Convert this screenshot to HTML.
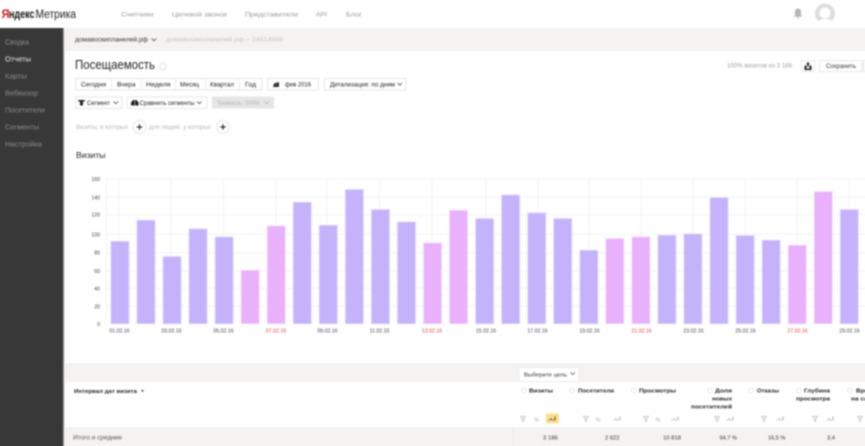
<!DOCTYPE html>
<html lang="ru">
<head>
<meta charset="utf-8">
<title>Яндекс Метрика</title>
<style>
html,body{margin:0;padding:0;background:#fff;width:865px;height:446px;overflow:hidden;position:relative}
svg{display:block;position:absolute;left:-10px;top:-10px;filter:blur(.75px)}
text{font-family:"Liberation Sans",sans-serif;font-size:6.5px;fill:#444}
.s{fill:#8a8a8a;font-size:7px}
.n{fill:#999;font-size:6.5px}
.b{fill:#222;font-size:6.2px}
.y{fill:#444;font-size:5.2px;text-anchor:end}
.x{fill:#444;font-size:5.2px;text-anchor:middle}
.r{fill:#dc3f4a;font-size:5.2px;text-anchor:middle}
.h{fill:#222;font-size:5.8px;font-weight:bold}
.v{fill:#333;font-size:5.8px}
.g{stroke:#f2f2f2;stroke-width:1;fill:none}
.btn{fill:#fff;stroke:#e6e6e6;stroke-width:1}
.chev{fill:none;stroke:#444;stroke-width:.8}
.f{fill:none;stroke:#bbb;stroke-width:.7}
.c{fill:#fff;stroke:#dcdcdc;stroke-width:.7}
</style>
</head>
<body>
<svg width="885" height="466" viewBox="-10 -10 885 466" xmlns="http://www.w3.org/2000/svg">
<rect x="-10" y="-10" width="885" height="466" fill="#fff"/>

<!-- header -->
<text x="1.5" y="18" style="font-size:12px;font-weight:bold;fill:#e01818" textLength="8" lengthAdjust="spacingAndGlyphs">Я</text>
<text x="9" y="18" style="font-size:11.5px;font-weight:bold;fill:#111" textLength="25.5" lengthAdjust="spacingAndGlyphs">ндекс</text>
<text x="35.5" y="18" style="font-size:11.5px;fill:#222" textLength="40.5" lengthAdjust="spacingAndGlyphs">Метрика</text>
<text class="n" x="121" y="16.5" textLength="32.5" lengthAdjust="spacingAndGlyphs">Счетчики</text>
<text class="n" x="172" y="16.5" textLength="55" lengthAdjust="spacingAndGlyphs">Целевой звонок</text>
<text class="n" x="245" y="16.5" textLength="53" lengthAdjust="spacingAndGlyphs">Представители</text>
<text class="n" x="316" y="16.5" textLength="11" lengthAdjust="spacingAndGlyphs">API</text>
<text class="n" x="346" y="16.5" textLength="16" lengthAdjust="spacingAndGlyphs">Блог</text>
<path d="M798 8.5c-2.2 0-3 1.800-3 3.700v3l-1 1.500h8l-1-1.500v-3c0-1.900-.8-3.700-3-3.700z M797 17.500h2v1h-2z" fill="#b5b5b5"/>
<circle cx="825" cy="13.500" r="10" fill="#dedede"/>
<circle cx="825" cy="13" r="5.500" fill="#fff"/>
<path d="M818 22c2-4 12-4 14 0l-3 2h-8z" fill="#fff"/>

<!-- sidebar -->
<rect x="-10" y="28" width="73" height="428" fill="#383838"/>
<rect x="63" y="28" width="1.200" height="428" fill="#9a9a9a"/>
<text class="s" x="5" y="44.500" textLength="24" lengthAdjust="spacingAndGlyphs">Сводка</text>
<text class="s" x="5" y="61.500" style="fill:#f0f0f0" textLength="26" lengthAdjust="spacingAndGlyphs">Отчеты</text>
<text class="s" x="5" y="78.500" textLength="22" lengthAdjust="spacingAndGlyphs">Карты</text>
<text class="s" x="5" y="95.500" textLength="33" lengthAdjust="spacingAndGlyphs">Вебвизор</text>
<text class="s" x="5" y="112.500" textLength="40" lengthAdjust="spacingAndGlyphs">Посетители</text>
<text class="s" x="5" y="129.500" textLength="34" lengthAdjust="spacingAndGlyphs">Сегменты</text>
<text class="s" x="5" y="146.500" textLength="37" lengthAdjust="spacingAndGlyphs">Настройка</text>

<!-- breadcrumb -->
<rect x="64" y="28" width="811" height="23" fill="#f4f3f1"/>
<text x="75" y="41.500" style="font-size:6.8px;fill:#333" textLength="73" lengthAdjust="spacingAndGlyphs">домавоскипланелей.рф</text>
<path class="chev" d="M151.500 38.500l2.500 2.200 2.500-2.200"/>
<text x="166" y="41.500" style="font-size:6.8px;fill:#c4c4c4" textLength="117" lengthAdjust="spacingAndGlyphs">домавоскипланелей.рф – 24414946</text>

<!-- title -->
<text x="75" y="69" style="font-size:13px;fill:#222" textLength="80" lengthAdjust="spacingAndGlyphs">Посещаемость</text>
<rect x="160" y="63.500" width="5.500" height="6" fill="none" stroke="#ddd" stroke-width=".8"/>
<text x="727" y="67.500" style="font-size:6px;fill:#a0a0a0" textLength="65" lengthAdjust="spacingAndGlyphs">100% визитов из 3 186</text>
<rect class="btn" x="801.500" y="60.500" width="13" height="11"/>
<path d="M804.500 65.500h2v3h3v-3h2v4.500h-7z M808 62l2 2h-4z M807.200 63.500h1.600v3h-1.600z" fill="#222"/>
<rect class="btn" x="819.500" y="60.500" width="42.500" height="11"/>
<text x="826" y="67.800" style="font-size:6.2px;fill:#333" textLength="30" lengthAdjust="spacingAndGlyphs">Сохранить</text>
<rect class="btn" x="863.500" y="60.500" width="14" height="11"/>

<!-- row 1 -->
<rect class="btn" x="75.500" y="78.500" width="186.500" height="11.500"/>
<path d="M111.500 79v11M141.500 79v11M175.500 79v11M205.500 79v11M239.500 79v11" stroke="#ececec" stroke-width="1"/>
<text class="b" x="81" y="86.500" textLength="25" lengthAdjust="spacingAndGlyphs">Сегодня</text>
<text class="b" x="117" y="86.500" textLength="18.500" lengthAdjust="spacingAndGlyphs">Вчера</text>
<text class="b" x="146" y="86.500" textLength="24.500" lengthAdjust="spacingAndGlyphs">Неделя</text>
<text class="b" x="180" y="86.500" textLength="19" lengthAdjust="spacingAndGlyphs">Месяц</text>
<text class="b" x="210" y="86.500" textLength="24" lengthAdjust="spacingAndGlyphs">Квартал</text>
<text class="b" x="245" y="86.500" textLength="11" lengthAdjust="spacingAndGlyphs">Год</text>
<rect class="btn" x="267.500" y="78.500" width="51" height="11.500"/>
<path d="M274 83.500l5-1.500v5h-6z" fill="#333"/>
<text class="b" x="285" y="86.500" textLength="26" lengthAdjust="spacingAndGlyphs">фев 2016</text>
<rect class="btn" x="324.500" y="78.500" width="81.500" height="11.500"/>
<text class="b" x="330" y="86.500" textLength="65" lengthAdjust="spacingAndGlyphs">Детализация: по дням</text>
<path class="chev" d="M397.500 83l2.300 2.200 2.300-2.200"/>

<!-- row 2 -->
<rect class="btn" x="75.500" y="97" width="46.500" height="11.500"/>
<path d="M78 100h7v1l-2 .8v3.700h-3v-3.700l-2-.8z" fill="#222"/>
<text class="b" x="87" y="104.800" textLength="23" lengthAdjust="spacingAndGlyphs">Сегмент</text>
<path class="chev" d="M113.500 101.500l2.300 2.200 2.300-2.200"/>
<rect class="btn" x="127.500" y="97" width="79.500" height="11.500"/>
<path d="M131 105.500v-3l2-2.500h1.500v5.500z M135 105.500v-5.500h1.500l2 2.500v3z" fill="#222"/>
<text class="b" x="139.500" y="104.800" textLength="55" lengthAdjust="spacingAndGlyphs">Сравнить сегменты</text>
<path class="chev" d="M197 101.500l2.300 2.200 2.300-2.200"/>
<rect x="212" y="96.500" width="62" height="12" fill="#e6e6e6"/>
<text x="217" y="104.800" style="font-size:6.2px;fill:#b0b0b0" textLength="43" lengthAdjust="spacingAndGlyphs">Точность: 100%</text>
<path d="M264.500 101.500l2.300 2.200 2.300-2.200" fill="none" stroke="#aaa" stroke-width=".8"/>

<!-- row 3 -->
<text x="76" y="128.800" style="font-size:6.2px;fill:#b8b8b8" textLength="52" lengthAdjust="spacingAndGlyphs">Визиты, в которых</text>
<circle class="c" cx="139.500" cy="127" r="6.500"/>
<path d="M136.700 127h5.600M139.500 124.200v5.600" stroke="#111" stroke-width="1"/>
<text x="149" y="128.800" style="font-size:6.2px;fill:#b8b8b8" textLength="62" lengthAdjust="spacingAndGlyphs">для людей, у которых</text>
<circle class="c" cx="223" cy="127" r="6.500"/>
<path d="M220.200 127h5.600M223 124.200v5.600" stroke="#111" stroke-width="1"/>

<text x="76" y="158" style="font-size:8.2px;fill:#222" textLength="29.500" lengthAdjust="spacingAndGlyphs">Визиты</text>

<!-- chart grid -->
<path class="g" d="M106 179H875M106 197.300H875M106 214.700H875M106 234.300H875M106 252.700H875M106 271H875M106 288.300H875M106 306.300H875"/>
<path class="g" d="M106.500 179V324M119 179V324M171 179V324M223.500 179V324M276 179V324M327 179V324M379.500 179V324M432 179V324M486 179V324M538 179V324M589 179V324M641 179V324M693 179V324M745 179V324M797 179V324M849 179V324"/>

<text class="y" x="100" y="181">160</text>
<text class="y" x="100" y="199.300">140</text>
<text class="y" x="100" y="216.700">120</text>
<text class="y" x="100" y="236.300">100</text>
<text class="y" x="100" y="254.700">80</text>
<text class="y" x="100" y="273">60</text>
<text class="y" x="100" y="290.300">40</text>
<text class="y" x="100" y="308.300">20</text>
<text class="y" x="100" y="326">0</text>

<!-- bars -->
<g stroke-width="1" stroke="#efe9fe" fill="#c4b2fb">
<rect x="110.700" y="241" width="18.500" height="83"/>
<rect x="136.700" y="220" width="18.500" height="104"/>
<rect x="162.800" y="256.300" width="18.500" height="67.700"/>
<rect x="188.800" y="228.700" width="18.500" height="95.300"/>
<rect x="214.900" y="236.700" width="18.500" height="87.300"/>
<rect x="293" y="202" width="18.500" height="122"/>
<rect x="319" y="225" width="18.500" height="99"/>
<rect x="345.100" y="189.300" width="18.500" height="134.700"/>
<rect x="371.200" y="209.300" width="18.500" height="114.700"/>
<rect x="397.200" y="221.700" width="18.500" height="102.300"/>
<rect x="475.400" y="218.300" width="18.500" height="105.700"/>
<rect x="501.400" y="194.700" width="18.500" height="129.300"/>
<rect x="527.500" y="212.700" width="18.500" height="111.300"/>
<rect x="553.500" y="218.300" width="18.500" height="105.700"/>
<rect x="579.600" y="250" width="18.500" height="74"/>
<rect x="657.700" y="235" width="18.500" height="89"/>
<rect x="683.700" y="233.700" width="18.500" height="90.300"/>
<rect x="709.800" y="197.300" width="18.500" height="126.700"/>
<rect x="735.900" y="235.300" width="18.500" height="88.700"/>
<rect x="761.900" y="240" width="18.500" height="84"/>
<rect x="840" y="209.300" width="18.500" height="114.700"/>
</g>
<g stroke-width="1" stroke="#f9ecfe" fill="#e9b0fb">
<rect x="240.900" y="270" width="18.500" height="54"/>
<rect x="267" y="225.700" width="18.500" height="98.300"/>
<rect x="423.300" y="242.700" width="18.500" height="81.300"/>
<rect x="449.300" y="210" width="18.500" height="114"/>
<rect x="605.600" y="238.300" width="18.500" height="85.700"/>
<rect x="631.700" y="236.700" width="18.500" height="87.300"/>
<rect x="788" y="245" width="18.500" height="79"/>
<rect x="814" y="191.300" width="18.500" height="132.700"/>
</g>

<!-- x labels -->
<text class="x" x="119.500" y="332.500">01.02.16</text>
<text class="x" x="171.500" y="332.500">03.02.16</text>
<text class="x" x="223.500" y="332.500">05.02.16</text>
<text class="r" x="276" y="332.500">07.02.16</text>
<text class="x" x="327.500" y="332.500">09.02.16</text>
<text class="x" x="379.500" y="332.500">11.02.16</text>
<text class="r" x="432" y="332.500">13.02.16</text>
<text class="x" x="486" y="332.500">15.02.16</text>
<text class="x" x="537.500" y="332.500">17.02.16</text>
<text class="x" x="589.500" y="332.500">19.02.16</text>
<text class="r" x="641.500" y="332.500">21.02.16</text>
<text class="x" x="693.500" y="332.500">23.02.16</text>
<text class="x" x="745.500" y="332.500">25.02.16</text>
<text class="r" x="797.500" y="332.500">27.02.16</text>
<text class="x" x="849.500" y="332.500">29.02.16</text>

<!-- table -->
<rect x="64" y="363" width="811" height="19" fill="#f4f3f1"/>
<rect x="519" y="367.500" width="60" height="14" rx="1" fill="#fff" stroke="#e8e8e8" stroke-width=".8"/>
<text x="524" y="376.500" style="font-size:5.800px;fill:#333" textLength="43" lengthAdjust="spacingAndGlyphs">Выберите цель</text>
<path class="chev" d="M570.500 372.500l2.200 2 2.200-2"/>
<text class="h" x="74" y="393" textLength="63" lengthAdjust="spacingAndGlyphs">Интервал дат визита</text>
<path d="M141 390h3l-1.500 2z" fill="#333"/>

<g>
<circle class="c" cx="524" cy="390.500" r="2.300"/><text class="h" x="529" y="392.500" textLength="24" lengthAdjust="spacingAndGlyphs">Визиты</text>
<circle class="c" cx="572" cy="390.500" r="2.300"/><text class="h" x="578" y="392.500" textLength="36" lengthAdjust="spacingAndGlyphs">Посетители</text>
<circle class="c" cx="634" cy="390.500" r="2.300"/><text class="h" x="639" y="392.500" textLength="37" lengthAdjust="spacingAndGlyphs">Просмотры</text>
<circle class="c" cx="710" cy="390.500" r="2.300"/><text class="h" x="715" y="392.500" textLength="17" lengthAdjust="spacingAndGlyphs">Доля</text>
<text class="h" x="712" y="400.500" textLength="20" lengthAdjust="spacingAndGlyphs">новых</text>
<text class="h" x="691" y="408.500" textLength="41" lengthAdjust="spacingAndGlyphs">посетителей</text>
<circle class="c" cx="751" cy="390.500" r="2.300"/><text class="h" x="757" y="392.500" textLength="22" lengthAdjust="spacingAndGlyphs">Отказы</text>
<circle class="c" cx="799" cy="390.500" r="2.300"/><text class="h" x="804" y="392.500" textLength="26" lengthAdjust="spacingAndGlyphs">Глубина</text>
<text class="h" x="796" y="400.500" textLength="34" lengthAdjust="spacingAndGlyphs">просмотра</text>
<circle class="c" cx="850" cy="390.500" r="2.300"/><text class="h" x="856" y="392.500" textLength="12" lengthAdjust="spacingAndGlyphs">Вре</text>
<text class="h" x="851" y="400.500" textLength="17" lengthAdjust="spacingAndGlyphs">на са</text>
</g>

<!-- metric icons -->
<rect x="546" y="413.500" width="13" height="10" rx="1" fill="#fbe08c"/>
<path d="M549 420.500v-1M551 420.500v-2.500M553 420.500v-1.500M555 420.500v-4" stroke="#222" stroke-width=".8"/>
<path class="f" d="M520.500 416.500h5l-2 2.500v2.500l-1-.6v-1.900z"/>
<path class="f" d="M583.500 416.500h5l-2 2.500v2.500l-1-.6v-1.900z"/>
<path class="f" d="M643.500 416.500h5l-2 2.500v2.500l-1-.6v-1.900z"/>
<path class="f" d="M714.500 416.500h5l-2 2.500v2.500l-1-.6v-1.900z"/>
<path class="f" d="M761.500 416.500h5l-2 2.500v2.500l-1-.6v-1.900z"/>
<path class="f" d="M812.500 416.500h5l-2 2.500v2.500l-1-.6v-1.900z"/>
<path class="f" d="M857.500 416.500h5l-2 2.500v2.500l-1-.6v-1.900z"/>
<text x="534" y="421.500" style="font-size:5.500px;fill:#aaa">%</text>
<text x="595.500" y="421.500" style="font-size:5.500px;fill:#aaa">%</text>
<text x="655.500" y="421.500" style="font-size:5.500px;fill:#aaa">%</text>
<path d="M614 420.500v-1M616 420.500v-2.500M618 420.500v-1.500M620 420.500v-4M672 420.500v-1M674 420.500v-2.500M676 420.500v-1.500M678 420.500v-4M727 420.500v-1M729 420.500v-2.500M731 420.500v-1.500M733 420.500v-4M777 420.500v-1M779 420.500v-2.500M781 420.500v-1.500M783 420.500v-4M827 420.500v-1M829 420.500v-2.500M831 420.500v-1.500M833 420.500v-4" stroke="#999" stroke-width=".8"/>

<!-- totals -->
<rect x="64" y="427" width="811" height="29" fill="#f4f3f1"/>
<text x="73" y="439.500" style="font-size:6.200px;fill:#555" textLength="49" lengthAdjust="spacingAndGlyphs">Итого и средние</text>
<rect x="513" y="427" width="1" height="29" fill="#ecebe8"/>
<text class="v" x="543" y="439.500" textLength="15" lengthAdjust="spacingAndGlyphs">3 186</text>
<text class="v" x="605" y="439.500" textLength="14.500" lengthAdjust="spacingAndGlyphs">2 622</text>
<text class="v" x="663" y="439.500" textLength="18" lengthAdjust="spacingAndGlyphs">10 818</text>
<text class="v" x="719.500" y="439.500" textLength="17.500" lengthAdjust="spacingAndGlyphs">94,7 %</text>
<text class="v" x="768" y="439.500" textLength="17.500" lengthAdjust="spacingAndGlyphs">16,5 %</text>
<text class="v" x="827" y="439.500" textLength="8" lengthAdjust="spacingAndGlyphs">3,4</text>
</svg>
</body>
</html>
